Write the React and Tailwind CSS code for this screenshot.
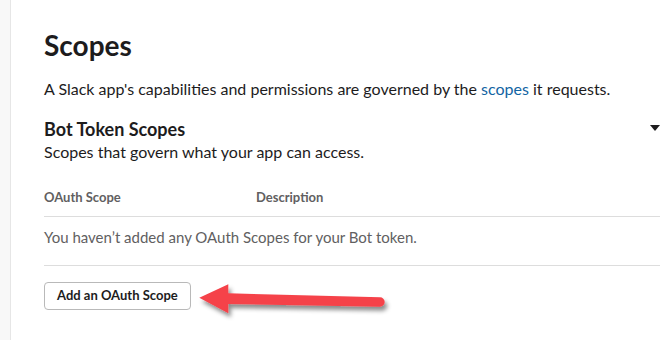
import React from 'react';

const font = { fontFamily: 'Lato, "Open Sans", sans-serif' };

const Arrow = () => (
  <svg className="absolute left-0 top-0 pointer-events-none" width="660" height="340" viewBox="0 0 660 340">
    <defs>
      <filter id="arrowShadow" x="-10%" y="-40%" width="130%" height="200%">
        <feDropShadow dx="2.5" dy="4" stdDeviation="2.2" floodColor="#000" floodOpacity="0.45" />
      </filter>
    </defs>
    <path
      d="M199.3 297.7 L228.3 284.3 L228.3 293.3 L380 297.3 A4.7 4.7 0 0 1 380 306.7 L228.3 304 L228.3 313.3 Z"
      fill="#f5424a"
      filter="url(#arrowShadow)"
    />
  </svg>
);

export default function App() {
  return (
    <div className="relative flex w-[660px] h-[340px] overflow-hidden bg-white text-[#1d1c1d]" style={font}>
      <div className="w-[11px] shrink-0 bg-[#f8f8f8] border-r border-[#e6e6e6]" />
      <div className="flex-1 min-w-0 pl-[33px] pt-[27px]">
        <h2 className="text-[28px] leading-[36px] font-bold">Scopes</h2>
        <p className="mt-[15px] text-[16px] leading-[22px] whitespace-nowrap">
          A Slack app's capabilities and permissions are governed by the{' '}
          <span className="text-[#1264a3]">scopes</span> it requests.
        </p>

        <div className="mt-[17px] flex items-start justify-between">
          <h3 className="text-[18px] leading-[24px] font-bold">Bot Token Scopes</h3>
          <div className="mt-[8px] w-0 h-0 border-l-[5px] border-r-[5px] border-t-[6px] border-l-transparent border-r-transparent border-t-[#1d1c1d]" />
        </div>
        <p className="text-[16px] leading-[22px]">Scopes that govern what your app can access.</p>

        <div className="mt-[25px] flex pb-[10px] border-b border-[#dddddd] text-[13px] leading-[18px] font-bold text-[#616061]">
          <div className="w-[212px]">OAuth Scope</div>
          <div>Description</div>
        </div>
        <div className="pt-[9px] pb-[17px] border-b border-[#dddddd] text-[15px] leading-[22px] text-[#616061]">
          You haven’t added any OAuth Scopes for your Bot token.
        </div>

        <button className="mt-[16px] h-[28px] px-[12px] rounded-[4px] border border-[#b9b9b9] bg-white text-[13px] font-bold text-[#1d1c1d]">
          Add an OAuth Scope
        </button>
      </div>
      <Arrow />
    </div>
  );
}
